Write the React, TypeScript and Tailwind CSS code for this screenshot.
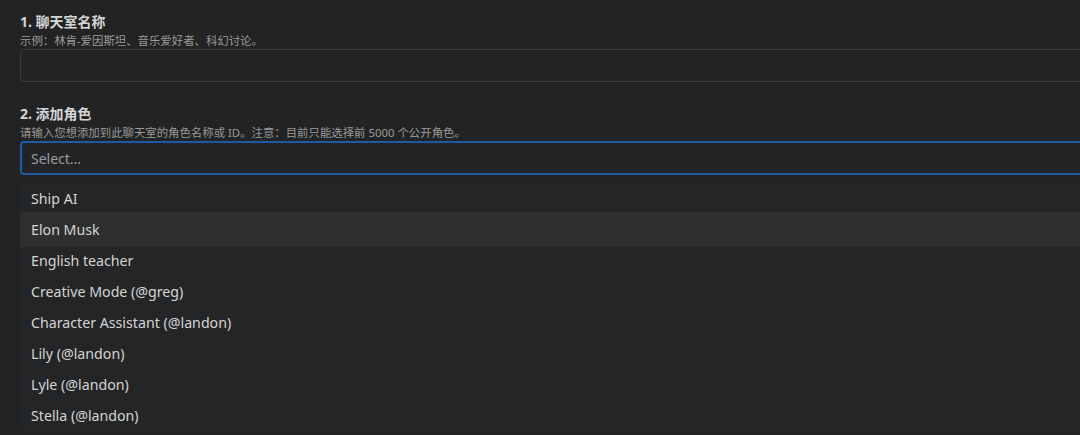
const characters = [
  'Ship AI',
  'Elon Musk',
  'English teacher',
  'Creative Mode (@greg)',
  'Character Assistant (@landon)',
  'Lily (@landon)',
  'Lyle (@landon)',
  'Stella (@landon)',
];

const font = { fontFamily: '"Noto Sans", "Noto Sans CJK SC", sans-serif' };

export default function App() {
  return (
    <div className="h-[435px] w-[1080px] overflow-hidden bg-[#222324]" style={font}>
      <div className="w-[1100px] pl-5 pt-[12px]">
        <h3 className="text-[14px] font-bold leading-5 text-[#d6d6d6]">1. 聊天室名称</h3>
        <p className="text-[11.4px] leading-[17px] text-[#9a9a9a]">示例：林肯-爱因斯坦、音乐爱好者、科幻讨论。</p>
        <div className="h-[33px] rounded border border-[#3a3b3c] bg-[#232425]"></div>

        <h3 className="mt-[22px] text-[14px] font-bold leading-5 text-[#d6d6d6]">2. 添加角色</h3>
        <p className="text-[11.4px] leading-[17px] text-[#9a9a9a]">
          请输入您想添加到此聊天室的角色名称或 ID。注意：目前只能选择前 5000 个公开角色。
        </p>
        <div className="flex h-[34px] items-center rounded border-2 border-[#1f58a6] bg-[#232425] px-[9px] text-[14px] text-[#9c9c9c]">
          Select...
        </div>

        <div className="mt-[4px] bg-[#242526] pt-1">
          {characters.map((name, i) => (
            <div
              key={name}
              className={`flex items-center px-[11px] text-[14.2px] text-[#d4d4d4] ${
                i === 1 ? 'relative -my-[2px] h-[35px] bg-[#2e2f2f]' : 'h-[31px]'
              }`}
            >
              {name}
            </div>
          ))}
        </div>
      </div>
    </div>
  );
}
